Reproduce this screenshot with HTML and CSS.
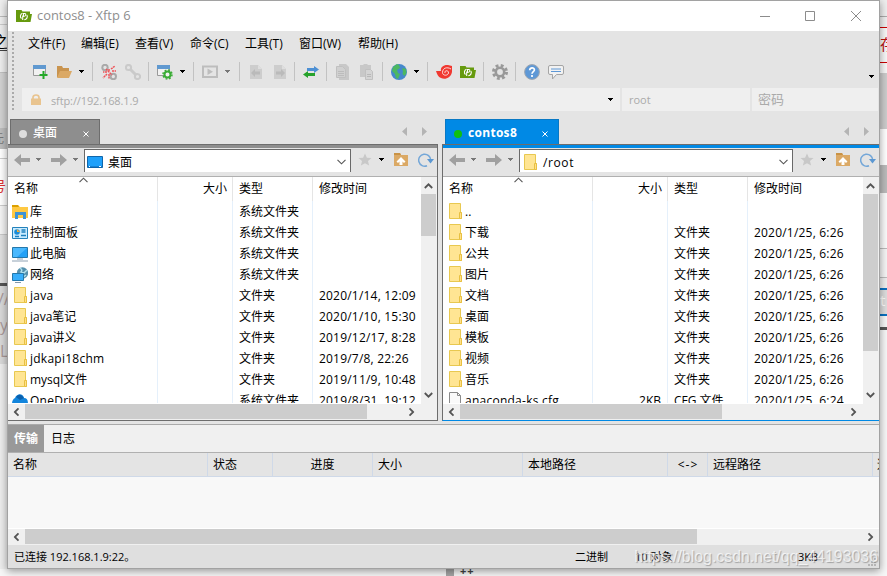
FILE: index.html
```html
<!DOCTYPE html>
<html lang="zh-CN">
<head>
    <meta charset="UTF-8">
    <title>contos8 - Xftp 6</title>
    <link rel="stylesheet" href="styles.css">
</head>
<body>
    <!-- shared icons -->
    <svg class="defs">
        <symbol id="caret" viewBox="0 0 5 3"><path d="M0 0h5v1h-1v1h-1v1h-1v-1h-1v-1h-1z"/></symbol>
        <symbol id="chevron" viewBox="0 0 9 6"><path d="M.8 1l3.7 3.7L8.2 1" fill="none" stroke="#555" stroke-width="1.8"/></symbol>
        <symbol id="chevron-thin" viewBox="0 0 9 6"><path d="M.5.8l4 4 4-4" fill="none" stroke="#555" stroke-width="1.1"/></symbol>
        <symbol id="back" viewBox="0 0 16 12"><path d="M0 6l7-6v4h9v4H7v4z" fill="#a0a0a0"/></symbol>
        <symbol id="folder" viewBox="0 0 14 16">
            <path d="M.5.5h11v9h1v6H.5z" fill="#ffe593" stroke="#e8c850"/>
            <path d="M10.500 15.500v-6h2v6z" fill="#ffe08a" stroke="#e8c042"/>
        </symbol>
        <symbol id="file" viewBox="0 0 14 16"><path d="M.5 .5h8l3 3V16H.5zM8.5.5v3h3" fill="#fafafa" stroke="#8a8a8a"/></symbol>
        <symbol id="star" viewBox="0 0 14 14"><path d="M7 .5l1.9 4.2 4.6.4-3.5 3 1.1 4.5L7 10.2l-4.1 2.4L4 8.1.5 5.1l4.6-.4z" fill="#c8c8c8"/></symbol>
        <symbol id="folder-up" viewBox="0 0 14 13">
            <path d="M0 0h6l1 2h7v11H0z" fill="#dba965"/><path d="M0 0h6l1 2H0z" fill="#c99244"/>
            <path d="M7 4l4.500 4.500-1.500 1.500-1.500-1.500V12h-3V8.500L4 10 2.500 8.500z" fill="#fff"/>
        </symbol>
        <symbol id="refresh" viewBox="0 0 16 14">
            <path d="M9 12.7A6 6 0 1 1 12.700 7" fill="none" stroke="#74a7d8" stroke-width="1.500"/>
            <path d="M9 6h7l-3.500 4.500z" fill="#5c98d2"/>
        </symbol>
        <symbol id="xftp" viewBox="0 0 16 12">
            <path d="M0 0h5.500l1 1.500H14V4h2l-1.500 8H0z" fill="#669a0e"/>
            <path d="M6.500 3.200a3.100 3.100 0 0 0-1 5.300M6.700 5.500V10M7.500 7V3.500H9q1 .2.800 1.500T7.500 6.500M8.300 9.700a3.100 3.100 0 0 0 2.600-4.600" fill="none" stroke="#fff" stroke-width="1.100"/>
        </symbol>
        <symbol id="gear" viewBox="0 0 16 16">
            <circle cx="8" cy="8" r="6.500" fill="none" stroke-width="3" stroke-dasharray="2.800 2.300"/>
            <circle cx="8" cy="8" r="4.200" fill="none" stroke-width="2.600"/>
        </symbol>
    </svg>

    <div class="desktop">
        <div class="behind behind-left">
            <div class="b-top"></div>
            <div class="b-word">之</div>
            <div class="b-gap"></div>
            <div class="b-band"></div>
            <div class="b-gray">元</div>
            <div class="b-white"></div>
            <div class="b-red">号</div>
            <div class="b-list"></div>
            <div class="b-code">//<br>yp<br>L</div>
        </div>

        <div class="window">
            <div class="titlebar">
                <svg class="app-icon"><use href="#xftp"/></svg>
                <span class="title">contos8 - Xftp 6</span>
                <svg class="win-buttons" viewBox="0 0 102 12">
                    <path d="M0 6.500h10M45.500 1.500h9v9h-9zM91 1l10 10M101 1L91 11" fill="none" stroke="#8c8c8c"/>
                </svg>
            </div>

            <div class="bars">
                <div class="menubar">
                    <span>文件(F)</span><span>编辑(E)</span><span>查看(V)</span><span>命令(C)</span><span>工具(T)</span><span>窗口(W)</span><span>帮助(H)</span>
                </div>

                <div class="toolbar">
                    <div class="group">
                        <svg class="icon" viewBox="0 0 16 16"><path d="M1.500 1.500h12v10h-12z" fill="#f1f1f1" stroke="#999"/><path d="M1 1h13v4H1z" fill="#6099d0"/><path d="M11.500 7v8M7.500 11h8" stroke="#24a828" stroke-width="2"/></svg>
                        <svg class="icon" viewBox="0 0 16 16"><path d="M1 2h5l1 2h6v3H5l-3 6H1z" fill="#c9944f"/><path d="M4 7h12l-3 7H1z" fill="#dba965"/></svg>
                        <svg class="caret"><use href="#caret"/></svg>
                    </div>
                    <div class="group">
                        <svg class="icon" viewBox="0 0 16 16"><g fill="none" stroke="#a9a9a9" stroke-width="2"><circle cx="4" cy="3.500" r="2.700"/><circle cx="12.300" cy="12.500" r="2.700"/></g><path d="M8 5v3M10 5l4-3M11 7h4M6 8H2M6 10l-4 4M8 10v5M5 5l6 6" stroke="#ee5358" stroke-width="1.500" stroke-dasharray="2 .6"/></svg>
                        <svg class="icon" viewBox="0 0 16 16"><g fill="none" stroke="#cacaca" stroke-width="2"><circle cx="3.500" cy="3.500" r="2.600"/><circle cx="12.500" cy="12.500" r="2.600"/><path d="M5 5l6 6" stroke-width="3"/></g></svg>
                    </div>
                    <div class="group">
                        <svg class="icon" viewBox="0 0 16 16"><path d="M.5 1.500h12v10H.5z" fill="#f1f1f1" stroke="#999"/><path d="M0 1h13v4H0z" fill="#6099d0"/><g stroke="#3aac35" fill="none"><circle cx="10.500" cy="10.500" r="3" stroke-width="2" fill="#f1f1f1"/><circle cx="10.500" cy="10.500" r="4.500" stroke-width="1.500" stroke-dasharray="1.800 1.730"/></g></svg>
                        <svg class="caret"><use href="#caret"/></svg>
                    </div>
                    <div class="group">
                        <svg class="icon" viewBox="0 0 16 16"><path d="M1 2.500h14v10.500H1z" fill="none" stroke="#bdbdbd" stroke-width="2"/><path d="M5.500 4.500L11 7.700l-5.500 3.200z" fill="#bdbdbd"/></svg>
                        <svg class="caret gray"><use href="#caret"/></svg>
                    </div>
                    <div class="group">
                        <svg class="icon" viewBox="0 0 16 16"><path d="M2 1h8l4 4v10H2z" fill="#cdcdcd"/><path d="M10 1v4h4" fill="#dedede"/><path d="M3 9l4-4v2.500h5v3H7V13z" fill="#bababa"/></svg>
                        <svg class="icon" viewBox="0 0 16 16"><path d="M2 1h8l4 4v10H2z" fill="#cdcdcd"/><path d="M10 1v4h4" fill="#dedede"/><path d="M13 9L9 5v2.500H4v3h5V13z" fill="#bababa"/></svg>
                    </div>
                    <div class="group">
                        <svg class="icon" viewBox="0 0 16 16"><path d="M4 4h7V2l5 3.500L11 9V7H4z" fill="#4d90d4"/><path d="M12 9H5V7L0 10.500 5 14v-2h7z" fill="#27a22c"/></svg>
                    </div>
                    <div class="group">
                        <svg class="icon" viewBox="0 0 16 16"><path d="M4 0h7l3 3v13H4z" fill="#c8c8c8"/><path d="M1.500 2.500h6l3 3v8h-9z" fill="#d0d0d0" stroke="#c0c0c0"/><path d="M3 7.500h6M3 9.500h6M3 11.500h6" stroke="#bcbcbc"/></svg>
                        <svg class="icon" viewBox="0 0 16 16"><path d="M1 1h3l1-1h3l1 1h3v12H1z" fill="#c8c8c8"/><path d="M6.500 5.500h5l2 2v8h-7z" fill="#d4d4d4" stroke="#c0c0c0"/><path d="M8 10.500h4M8 12.500h4" stroke="#b8b8b8"/></svg>
                    </div>
                    <div class="group">
                        <svg class="icon" viewBox="0 0 16 16"><circle cx="8" cy="8" r="8" fill="#4688cc"/><path d="M2 3l4-3 2 1 1 3-3 2 1 3 2 1-2 5-2-1-1-4-3-3zM12 4l3 1 .5 4-2 3-2-2 .5-3-1-2z" fill="#4cb861"/></svg>
                        <svg class="caret"><use href="#caret"/></svg>
                    </div>
                    <div class="group">
                        <svg class="icon" viewBox="0 0 16 16"><path d="M0 7h5C4 3 8 .5 12 1l4 1v6c-1 6-7 8-11 6-3-1-4-4-5-7z" fill="#f03931"/><path d="M9 9c-1-3 4-3 3.500 0-.5 3-6 3-6-.5C6.500 4 11 2.500 15 5" fill="none" stroke="#fff" stroke-width=".8"/></svg>
                        <svg class="icon" viewBox="0 -2 16 16"><use href="#xftp" width="16" height="12"/></svg>
                    </div>
                    <div class="group">
                        <svg class="icon" stroke="#999"><use href="#gear"/></svg>
                    </div>
                    <div class="group">
                        <svg class="icon" viewBox="0 0 16 16"><circle cx="8" cy="8" r="7.400" fill="#5e98d6" stroke="#9fa7b0"/><path d="M5.700 6.200c0-3.200 4.800-3 4.700-.2C10.300 7.600 8 7.700 8 9.800M8 11v2" fill="none" stroke="#fff" stroke-width="1.700"/></svg>
                        <svg class="icon" viewBox="0 0 16 16"><path d="M2 1.500h12q1.500 0 1.500 1.500v6q0 1.500-1.500 1.500H8.500L4.500 15v-4.500H2Q.5 10.500.5 9V3Q.5 1.500 2 1.500z" fill="#f2f2f2" stroke="#a5a5a5"/><path d="M3 5h10M3 7.500h10" stroke="#5e98d6" stroke-width="1.200"/></svg>
                    </div>
                    <svg class="caret more"><use href="#caret"/></svg>
                </div>

                <div class="addressbar">
                    <div class="field host">
                        <svg class="lock" viewBox="0 0 10 11"><path d="M2 5V3.500Q2 1 5 1t3 2.500V5" fill="none" stroke="#e9c48f" stroke-width="1.700"/><path d="M0 4.500h10V11H0z" fill="#e9c48f"/></svg>
                        <span>sftp://192.168.1.9</span>
                        <svg class="caret"><use href="#caret"/></svg>
                    </div>
                    <div class="field user">root</div>
                    <div class="field password">密码</div>
                </div>
            </div>

            <div class="panes">
                <section class="pane local">
                    <div class="tabs">
                        <div class="tab"><i class="dot"></i><b>桌面</b><svg class="close" viewBox="0 0 6 6"><path d="M.5.5l5 5M5.500.5l-5 5" stroke="#fff"/></svg></div>
                        <svg class="tab-scroll" viewBox="0 0 25 10"><path d="M5 0v9L0 4.500zM20 0v9l5-4.500z" fill="#b4b4b4"/></svg>
                    </div>
                    <div class="view">
                        <div class="navbar">
                            <svg class="arrow"><use href="#back"/></svg><svg class="caret gray"><use href="#caret"/></svg>
                            <svg class="arrow forward"><use href="#back"/></svg><svg class="caret gray"><use href="#caret"/></svg>
                            <div class="combo">
                                <svg class="combo-icon" viewBox="0 0 16 12"><path d="M.5.5h15v11H.5z" fill="#1ea0fa" stroke="#1166aa"/><path d="M1 11h14" stroke="#0b62ac"/><path d="M2 10.500h1M12 10.500h2" stroke="#fff"/></svg>
                                <span>桌面</span>
                                <svg class="chev"><use href="#chevron-thin"/></svg>
                            </div>
                            <svg class="star"><use href="#star"/></svg><svg class="caret"><use href="#caret"/></svg>
                            <svg class="up"><use href="#folder-up"/></svg><svg class="refresh"><use href="#refresh"/></svg>
                        </div>
                        <div class="listing">
                            <div class="list">
                                <div class="row head"><span>名称<svg class="sort"><use href="#chevron-thin"/></svg></span><span class="size">大小</span><span>类型</span><span>修改时间</span></div>
                                <div class="row"><span><svg class="ico" viewBox="0 0 16 16"><path d="M0 1h6l2 2h8v11H0z" fill="#ffc943"/><path d="M0 1h6l1 2H0z" fill="#dca000"/><path d="M3 15V8h11v7h-3v-4H6v4z" fill="#3f93d4"/></svg>库</span><span></span><span>系统文件夹</span><span></span></div>
                                <div class="row"><span><svg class="ico" viewBox="0 0 16 16"><path d="M.5 2.500h15v11H.5z" fill="#c9ebff" stroke="#2482bb"/><circle cx="5" cy="7" r="2.800" fill="#198cd8"/><path d="M5 4v3h3" fill="#f5ad35"/><path d="M9.500 5h4M9.500 7h4M3 11.500h4M9 10.500h5" stroke="#1e81bf" stroke-width="1.400"/></svg>控制面板</span><span></span><span>系统文件夹</span><span></span></div>
                                <div class="row"><span><svg class="ico" viewBox="0 0 16 16"><path d="M.5 1.500h15v10H.5z" fill="#4ab8fd" stroke="#2478ab"/><path d="M15 2v9H5z" fill="#24a1f6"/><path d="M5 13h6M0 15h16" stroke="#8fa2b4"/></svg>此电脑</span><span></span><span>系统文件夹</span><span></span></div>
                                <div class="row"><span><svg class="ico" viewBox="0 0 16 16"><circle cx="10.500" cy="6" r="5.700" fill="#5590ad"/><path d="M8 1q3 2 1 4l3 1 3-3M10 11l4-3" fill="none" stroke="#b0e0ee" stroke-width="1.500"/><path d="M.5 6.500h11v7H.5z" fill="#37aefb" stroke="#2478ab"/><path d="M3 15.500h6" stroke="#8298a9"/></svg>网络</span><span></span><span>系统文件夹</span><span></span></div>
                                <div class="row"><span class="latin"><svg class="ico folder"><use href="#folder"/></svg>java</span><span></span><span>文件夹</span><span class="date">2020/1/14, 12:09</span></div>
                                <div class="row"><span><svg class="ico folder"><use href="#folder"/></svg>java笔记</span><span></span><span>文件夹</span><span class="date">2020/1/10, 15:30</span></div>
                                <div class="row"><span><svg class="ico folder"><use href="#folder"/></svg>java讲义</span><span></span><span>文件夹</span><span class="date">2019/12/17, 8:28</span></div>
                                <div class="row"><span class="latin"><svg class="ico folder"><use href="#folder"/></svg>jdkapi18chm</span><span></span><span>文件夹</span><span class="date">2019/7/8, 22:26</span></div>
                                <div class="row"><span><svg class="ico folder"><use href="#folder"/></svg>mysql文件</span><span></span><span>文件夹</span><span class="date">2019/11/9, 10:48</span></div>
                                <div class="row"><span class="latin"><svg class="ico" viewBox="0 0 16 16"><path d="M3 5c2-5 8-5 9 0 3 0 4 2 4 6H0c0-3 1-5 3-6z" fill="#1385dc"/><path d="M4 4q4-5 8 1l-4 2z" fill="#0b60ad"/></svg>OneDrive</span><span></span><span>系统文件夹</span><span class="date">2019/8/31, 19:12</span></div>
                            </div>
                            <div class="vscroll"><svg class="chev flip"><use href="#chevron"/></svg><i class="thumb"></i><svg class="chev end"><use href="#chevron"/></svg></div>
                        </div>
                        <div class="hscroll"><svg class="chev left"><use href="#chevron"/></svg><i class="thumb"></i><svg class="chev right"><use href="#chevron"/></svg></div>
                    </div>
                </section>

                <section class="pane remote">
                    <div class="tabs">
                        <div class="tab"><i class="dot"></i><b>contos8</b><svg class="close" viewBox="0 0 6 6"><path d="M.5.5l5 5M5.500.5l-5 5" stroke="#fff"/></svg></div>
                        <svg class="tab-scroll" viewBox="0 0 25 10"><path d="M5 0v9L0 4.500zM20 0v9l5-4.500z" fill="#b4b4b4"/></svg>
                    </div>
                    <div class="view">
                        <div class="navbar">
                            <svg class="arrow"><use href="#back"/></svg><svg class="caret gray"><use href="#caret"/></svg>
                            <svg class="arrow forward"><use href="#back"/></svg><svg class="caret gray"><use href="#caret"/></svg>
                            <div class="combo">
                                <svg class="combo-icon folder"><use href="#folder"/></svg>
                                <span class="path">/root</span>
                                <svg class="chev"><use href="#chevron-thin"/></svg>
                            </div>
                            <svg class="star"><use href="#star"/></svg><svg class="caret"><use href="#caret"/></svg>
                            <svg class="up"><use href="#folder-up"/></svg><svg class="refresh"><use href="#refresh"/></svg>
                        </div>
                        <div class="listing">
                            <div class="list">
                                <div class="row head"><span>名称<svg class="sort"><use href="#chevron-thin"/></svg></span><span class="size">大小</span><span>类型</span><span>修改时间</span></div>
                                <div class="row"><span><svg class="ico folder"><use href="#folder"/></svg>..</span><span></span><span></span><span></span></div>
                                <div class="row"><span><svg class="ico folder"><use href="#folder"/></svg>下载</span><span></span><span>文件夹</span><span class="date">2020/1/25, 6:26</span></div>
                                <div class="row"><span><svg class="ico folder"><use href="#folder"/></svg>公共</span><span></span><span>文件夹</span><span class="date">2020/1/25, 6:26</span></div>
                                <div class="row"><span><svg class="ico folder"><use href="#folder"/></svg>图片</span><span></span><span>文件夹</span><span class="date">2020/1/25, 6:26</span></div>
                                <div class="row"><span><svg class="ico folder"><use href="#folder"/></svg>文档</span><span></span><span>文件夹</span><span class="date">2020/1/25, 6:26</span></div>
                                <div class="row"><span><svg class="ico folder"><use href="#folder"/></svg>桌面</span><span></span><span>文件夹</span><span class="date">2020/1/25, 6:26</span></div>
                                <div class="row"><span><svg class="ico folder"><use href="#folder"/></svg>模板</span><span></span><span>文件夹</span><span class="date">2020/1/25, 6:26</span></div>
                                <div class="row"><span><svg class="ico folder"><use href="#folder"/></svg>视频</span><span></span><span>文件夹</span><span class="date">2020/1/25, 6:26</span></div>
                                <div class="row"><span><svg class="ico folder"><use href="#folder"/></svg>音乐</span><span></span><span>文件夹</span><span class="date">2020/1/25, 6:26</span></div>
                                <div class="row"><span class="latin"><svg class="ico folder"><use href="#file"/></svg>anaconda-ks.cfg</span><span class="size">2KB</span><span>CFG 文件</span><span class="date">2020/1/25, 6:24</span></div>
                            </div>
                            <div class="vscroll"><svg class="chev flip"><use href="#chevron"/></svg><i class="thumb"></i><svg class="chev end"><use href="#chevron"/></svg></div>
                        </div>
                        <div class="hscroll"><svg class="chev left"><use href="#chevron"/></svg><i class="thumb"></i><svg class="chev right"><use href="#chevron"/></svg></div>
                    </div>
                </section>
            </div>

            <div class="transfer">
                <div class="transfer-tabs"><b>传输</b><span>日志</span></div>
                <div class="transfer-head">
                    <span>名称</span><span>状态</span><span class="center">进度</span><span>大小</span><span>本地路径</span><span class="center direction">&lt;-&gt;</span><span>远程路径</span><span>速</span>
                </div>
                <div class="transfer-body"></div>
                <div class="hscroll"><svg class="chev left"><use href="#chevron"/></svg><i class="thumb"></i><svg class="chev right"><use href="#chevron"/></svg></div>
            </div>

            <div class="statusbar">
                <span>已连接 192.168.1.9:22。</span><span>二进制</span><span>10 对象</span><span>3KB</span>
                <svg class="resize" viewBox="0 0 8 8"><path d="M6 0h2v2H6zM3 3h2v2H3zM6 3h2v2H6zM0 6h2v2H0zM3 6h2v2H3zM6 6h2v2H6z" fill="#b5b5b5"/></svg>
                <div class="watermark">https://blog.csdn.net/qq_44193036</div>
            </div>
        </div>

        <div class="behind behind-right">
            <div class="r-top"></div>
            <div class="r-error">存</div>
            <div class="r-gap"></div>
            <div class="r-gray"></div>
            <div class="r-mark"></div>
            <div class="r-bar"></div>
            <div class="r-rows"></div>
            <div class="r-button">t</div>
            <div class="r-line"></div>
        </div>
    </div>
    <div class="below"><i></i><b>++</b></div>
</body>
</html>
```

FILE: styles.css
```css
* {
    box-sizing: border-box;
}

body {
    margin: 0;
    width: 887px;
    height: 576px;
    overflow: hidden;
    background: #f7f7f7;
    color: #000;
    font: 12px/21px "Open Sans", "Noto Sans CJK SC", sans-serif;
}

svg {
    display: block;
    flex: none;
}

.defs {
    display: none;
}

.desktop {
    display: grid;
    grid-template-columns: 7px 873px 7px;
    height: 569px;
}

/* slices of the page behind the window */
.behind {
    overflow: hidden;
    white-space: nowrap;
    background: #f7f7f7;
}

.behind-left {
    background: #ededed;
}

.b-top {
    height: 25px;
    border-bottom: 1px solid #c9c9c9;
    background: linear-gradient(#eee 16px, #bbb 16px, #bbb 17px, #eee 17px);
}

.b-word {
    height: 26px;
    padding-top: 6px;
    border-bottom: 1px solid #444;
    text-indent: -7px;
    font-size: 15px;
}

.b-gap {
    height: 22px;
    border-bottom: 1px solid #c0c0c0;
}

.b-band {
    height: 55px;
    background: #d2d2d2;
}

.b-gray {
    height: 21px;
    background: #bdbdbd;
    color: #777;
    text-indent: -8px;
}

.b-white {
    height: 26px;
    background: linear-gradient(#fff 9px, #ccc 9px, #ccc 10px, #fff 10px);
}

.b-red {
    height: 30px;
    color: #d33;
    font-size: 14px;
    text-indent: -8px;
    background: #fff;
}

.b-list {
    height: 81px;
    border-bottom: 3px solid #555;
    background: linear-gradient(#ccc 1px, #f4f4f4 1px, #f4f4f4 29px, #c8c8c8 29px, #c8c8c8 30px, #e0e0e0 30px);
}

.b-code {
    height: 78px;
    background: #d9d9d9;
    color: #a99;
    font: 16px/26px "Open Sans", sans-serif;
    text-indent: -2px;
}

.r-top {
    height: 27px;
    background: linear-gradient(#eee 16px, #aaa 16px, #aaa 17px, #eee 17px);
}

.r-error {
    height: 36px;
    padding-top: 6px;
    border-top: 1px solid #c00;
    border-bottom: 1px solid #c00;
    color: #b11;
    font-size: 15px;
}

.r-gap {
    height: 10px;
}

.r-gray {
    height: 56px;
    background: #ccc;
}

.r-mark {
    height: 36px;
    background: #fff;
}

.r-bar {
    height: 28px;
    background: #bbb;
}

.r-rows {
    height: 95px;
    background: linear-gradient(#fafafa 55px, #bbb 55px, #bbb 56px, #f5f5f5 56px, #f5f5f5 84px, #bbb 84px, #bbb 85px, #eee 85px);
}

.r-button {
    height: 28px;
    border-top: 2px solid #0a70c0;
    border-bottom: 2px solid #0a70c0;
    background: #ddd;
    color: #fff;
    font-size: 15px;
}

.r-line {
    height: 14px;
    border-bottom: 3px solid #555;
}

.below {
    display: flex;
    height: 7px;
    padding-left: 446px;
    overflow: hidden;
}

.below i {
    width: 8px;
    background: #a5a5a5;
}

.below b {
    padding-left: 6px;
    color: #444;
    font-size: 11px;
    line-height: 4px;
    letter-spacing: 1px;
}

.window {
    position: relative;
    display: flex;
    flex-direction: column;
    border: 1px solid #a2a2a2;
    background: #e4e4e4;
    box-shadow: 0 2px 8px rgba(0, 0, 0, .4);
}

.titlebar {
    display: flex;
    align-items: center;
    height: 30px;
    padding: 0 17px 1px 8px;
    background: #fff;
}

.app-icon {
    width: 16px;
    height: 12px;
}

.title {
    flex: 1;
    padding-left: 5px;
    color: #8e8e8e;
    font-size: 12.9px;
}

.win-buttons {
    width: 102px;
    height: 12px;
}

/* menu, toolbar and address share the dotted grip */
.bars {
    height: 81px;
    background: radial-gradient(circle, #aaa 1px, transparent 1.2px) 3px 0 / 4px 4px repeat-y;
}

.menubar {
    display: grid;
    grid-template-columns: 53px 54px 55px 55px 54px 59px 1fr;
    height: 26px;
    padding: 2px 0 0 20px;
    white-space: nowrap;
}

.toolbar {
    display: grid;
    grid-template-columns: 64px 56px 45px 46px 55px 32px 56px 45px 56px 32px 1fr 11px;
    height: 31px;
    padding: 5px 0 7px 20px;
}

.group {
    display: flex;
    align-items: center;
    gap: 8px;
    padding-left: 8px;
}

.group:first-child {
    padding-left: 4px;
}

.group + .group {
    border-left: 1px solid #c2c2c2;
}

.icon {
    width: 16px;
    height: 16px;
}

.caret {
    width: 5px;
    height: 3px;
    fill: #000;
}

.caret.gray {
    fill: #777;
}

.group .caret {
    margin-left: -1px;
}

.toolbar .more {
    margin: 13px 0 0 1px;
}

.addressbar {
    display: grid;
    grid-template-columns: 598px 128px 126px;
    gap: 2px;
    height: 23px;
    padding-left: 14px;
    color: #aaa;
}

.field {
    display: flex;
    align-items: center;
    padding: 0 7px;
    background: #efefef;
    font: 11px "Open Sans", sans-serif;
}

.user {
    padding-bottom: 1px;
}

.password {
    padding-left: 6px;
    padding-bottom: 2px;
    font: 13px "Noto Sans CJK SC", sans-serif;
}

.field .lock {
    width: 10px;
    height: 11px;
    margin: 0 10px 0 2px;
}

.host span {
    flex: 1;
    padding-top: 2px;
    letter-spacing: -.12px;
}

.panes {
    display: grid;
    grid-template-columns: 430px 437px;
    gap: 4px;
    height: 309px;
}

.pane {
    --accent: #8e8e8e;
    display: flex;
    flex-direction: column;
}

.remote {
    --accent: #0089e5;
}

.tabs {
    display: flex;
    justify-content: space-between;
    height: 32px;
    padding: 7px 8px 0 2px;
}

.remote .tabs {
    padding-left: 3px;
}

.local .tabs {
    padding-right: 9px;
}

.tab {
    display: flex;
    align-items: center;
    width: 90px;
    padding: 0 10px 0 8px;
    border: 1px solid #6d6d6d;
    border-bottom: 0;
    background: var(--accent);
    color: #fff;
    font-size: 12px;
}

.remote .tab {
    width: 114px;
    border-color: #0878c4;
}

.tab b {
    flex: 1;
    padding-left: 6px;
}

.local .tab b {
    font-weight: 500;
}

.remote .tab b {
    font-weight: 700;
    letter-spacing: .3px;
}

.dot {
    width: 8px;
    height: 8px;
    margin-top: 3px;
    border-radius: 50%;
    background: #ddd;
}

.remote .dot {
    background: #10c010;
}

.close {
    width: 6px;
    height: 6px;
    margin-top: 3px;
}

.tab-scroll {
    width: 25px;
    height: 10px;
    margin: 8px 2px 0 0;
}

.view {
    display: flex;
    flex-direction: column;
    height: 277px;
    border-top: 1px solid #6d6d6d;
    border-bottom: 1px solid #6d6d6d;
}

.local .view {
    border-right: 1px solid #6d6d6d;
}

.remote .view {
    border-left: 1px solid #6d6d6d;
    border-bottom-color: #0089e5;
}

.navbar {
    display: flex;
    align-items: center;
    height: 32px;
    padding: 0 3px 5px 6px;
    border-top: 3px solid var(--accent);
    border-bottom: 1px solid #b0b0b0;
}

.arrow {
    width: 16px;
    height: 12px;
}

.forward {
    transform: scaleX(-1);
    margin-left: 10px;
}

.navbar .caret {
    margin: 0 0 0 6px;
}

.combo {
    display: flex;
    flex: 1;
    align-items: center;
    height: 23px;
    margin: 2px 0 0 6px;
    padding: 2px 4px 0 2px;
    border: 1px solid #696969;
    border-bottom: 0;
    background: #fff;
}

.combo-icon {
    width: 16px;
    height: 12px;
}

.combo-icon.folder {
    width: 14px;
    height: 16px;
    margin: 0 0 0 2px;
}

.combo span {
    flex: 1;
    padding-left: 5px;
}

.combo .path {
    letter-spacing: .6px;
}

.star {
    width: 14px;
    height: 14px;
    margin-left: 7px;
}

.navbar .star + .caret {
    margin-left: 7px;
}

.up {
    width: 14px;
    height: 13px;
    margin-left: 10px;
}

.refresh {
    width: 16px;
    height: 14px;
    margin-left: 10px;
}

.listing {
    display: flex;
    height: 227px;
    background: #fff;
}

.list {
    flex: 1;
    height: 226px;
    overflow: hidden;
}

.row {
    display: grid;
    grid-template-columns: 150px 75px 80px 1fr;
    height: 21px;
}

.row > span {
    display: flex;
    align-items: center;
    padding-left: 6px;
    border-right: 1px solid #e5f0fb;
    white-space: nowrap;
}

.row > span:first-child {
    padding-left: 4px;
}

.row > span:last-child {
    border-right: 0;
}

.row > .size {
    justify-content: flex-end;
    padding-right: 6px;
}

.row > .date {
    letter-spacing: .2px;
}

.row > .latin {
    letter-spacing: .25px;
}

.row.head {
    height: 24px;
}

.row.head > span {
    position: relative;
    padding-left: 6px;
    padding-bottom: 1px;
    border-right-color: #e5e5e5;
}

.row.head > .size {
    padding-right: 5px;
}

.row.head > span:last-child {
    border-right: 0;
}

.sort {
    position: absolute;
    left: 71px;
    top: 0;
    width: 9px;
    height: 6px;
    transform: scaleY(-1);
}

.ico {
    width: 16px;
    height: 16px;
    margin-right: 2px;
}

.ico.folder {
    width: 14px;
    margin: 0 2px 1px;
}

.chev {
    width: 9px;
    height: 6px;
}

.flip {
    transform: scaleY(-1);
}

.vscroll {
    display: flex;
    flex-direction: column;
    align-items: center;
    width: 16px;
    height: 227px;
    padding: 6px 1px 6px 0;
    background: #f0f0f0;
}

.vscroll .thumb {
    width: 15px;
    height: 42px;
    margin-top: 5px;
    background: #cdcdcd;
}

.remote .vscroll .thumb {
    height: 157px;
}

.vscroll .end {
    margin-top: auto;
}

.hscroll {
    display: flex;
    align-items: center;
    height: 16px;
    padding: 0 0 1px 4px;
    background: #f0f0f0;
}

.hscroll .left {
    transform: rotate(90deg);
}

.hscroll .right {
    margin: 0 21px 0 auto;
    transform: rotate(-90deg);
}

.hscroll .thumb {
    width: 342px;
    height: 15px;
    margin-left: 4px;
    background: #cdcdcd;
}

.remote .hscroll .thumb {
    width: 262px;
}

.transfer {
    height: 121px;
    margin-top: 3px;
    border-top: 1px solid #aaa;
}

.transfer-tabs {
    display: flex;
    height: 27px;
    background: #f0f0f0;
    line-height: 27px;
}

.transfer-tabs b {
    width: 36px;
    background: #999;
    color: #fff;
    text-align: center;
}

.transfer-tabs span {
    padding-left: 7px;
}

.transfer-head {
    display: grid;
    grid-template-columns: 200px 65px 100px 150px 145px 40px 165px 6px;
    height: 25px;
    border-top: 1px solid #b0b0b0;
    border-bottom: 1px solid #cfd9e8;
    line-height: 23px;
}

.transfer-head span {
    overflow: hidden;
    padding-left: 5px;
    border-right: 1px solid #cfd9e8;
    white-space: nowrap;
}

.transfer-head .center {
    padding: 0;
    text-align: center;
}

.transfer-head .direction {
    padding-left: 1px;
    letter-spacing: 1px;
}

.transfer-head span:last-child {
    padding-left: 4px;
    border: 0;
}

.transfer-body {
    height: 52px;
    border-bottom: 1px solid #fff;
    background: #f8f8f8;
}

.transfer .hscroll .thumb {
    width: 672px;
}

.transfer .hscroll .right {
    margin-right: 4px;
}

.statusbar {
    position: relative;
    display: grid;
    grid-template-columns: 561px 60px 163px 1fr;
    height: 23px;
    padding-left: 6px;
    background: #dfdfdf;
    font-size: 11px;
    line-height: 23px;
}

.resize {
    position: absolute;
    right: 3px;
    bottom: 2px;
    width: 8px;
    height: 8px;
}

.watermark {
    position: absolute;
    right: 1px;
    top: 0;
    color: rgba(255, 255, 255, .7);
    font: 15.9px/23px "Liberation Sans", sans-serif;
    text-shadow: 1px 1px 1px rgba(120, 120, 120, .6);
}
```
